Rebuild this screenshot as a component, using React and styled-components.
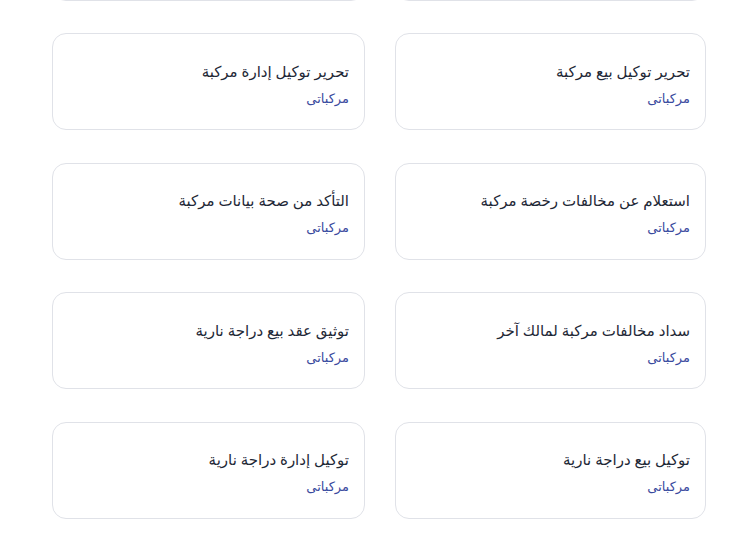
import React from "react";
import styled, { createGlobalStyle } from "styled-components";

const GlobalStyle = createGlobalStyle`
  html, body {
    margin: 0;
    padding: 0;
    background: #ffffff;
    overflow: hidden;
  }
  body {
    font-family: "Noto Sans", "DejaVu Sans", sans-serif;
  }
`;

const Page = styled.div`
  width: 754px;
  height: 552px;
  overflow: hidden;
  direction: rtl;
`;

// list is scrolled: the previous row's cards peek in at the top edge
const Grid = styled.div`
  display: grid;
  grid-template-columns: 311px 313px;
  column-gap: 30px;
  row-gap: 32.6px;
  padding: 0 48px 0 52px;
  margin-top: -96.4px;
`;

const Card = styled.a`
  display: flex;
  flex-direction: column;
  justify-content: center;
  gap: 6px;
  box-sizing: border-box;
  height: 97px;
  padding: 4px 15px 0 15px;
  border: 1px solid #e0e2e8;
  border-radius: 14px;
  background: #fff;
  text-decoration: none;
  cursor: pointer;
`;

const Title = styled.span`
  font-size: 15px;
  color: #1e2836;
  line-height: 22px;
`;

const Provider = styled.span`
  font-size: 13px;
  color: #3a4a9e;
  line-height: 20px;
`;

const services = [
  { title: "", provider: "" },
  { title: "", provider: "" },
  { title: "تحرير توكيل بيع مركبة", provider: "مركباتى" },
  { title: "تحرير توكيل إدارة مركبة", provider: "مركباتى" },
  { title: "استعلام عن مخالفات رخصة مركبة", provider: "مركباتى" },
  { title: "التأكد من صحة بيانات مركبة", provider: "مركباتى" },
  { title: "سداد مخالفات مركبة لمالك آخر", provider: "مركباتى" },
  { title: "توثيق عقد بيع دراجة نارية", provider: "مركباتى" },
  { title: "توكيل بيع دراجة نارية", provider: "مركباتى" },
  { title: "توكيل إدارة دراجة نارية", provider: "مركباتى" },
];

export default function App() {
  return (
    <Page>
      <GlobalStyle />
      <Grid>
        {services.map((s, i) => (
          <Card key={i}>
            <Title>{s.title}</Title>
            <Provider>{s.provider}</Provider>
          </Card>
        ))}
      </Grid>
    </Page>
  );
}
